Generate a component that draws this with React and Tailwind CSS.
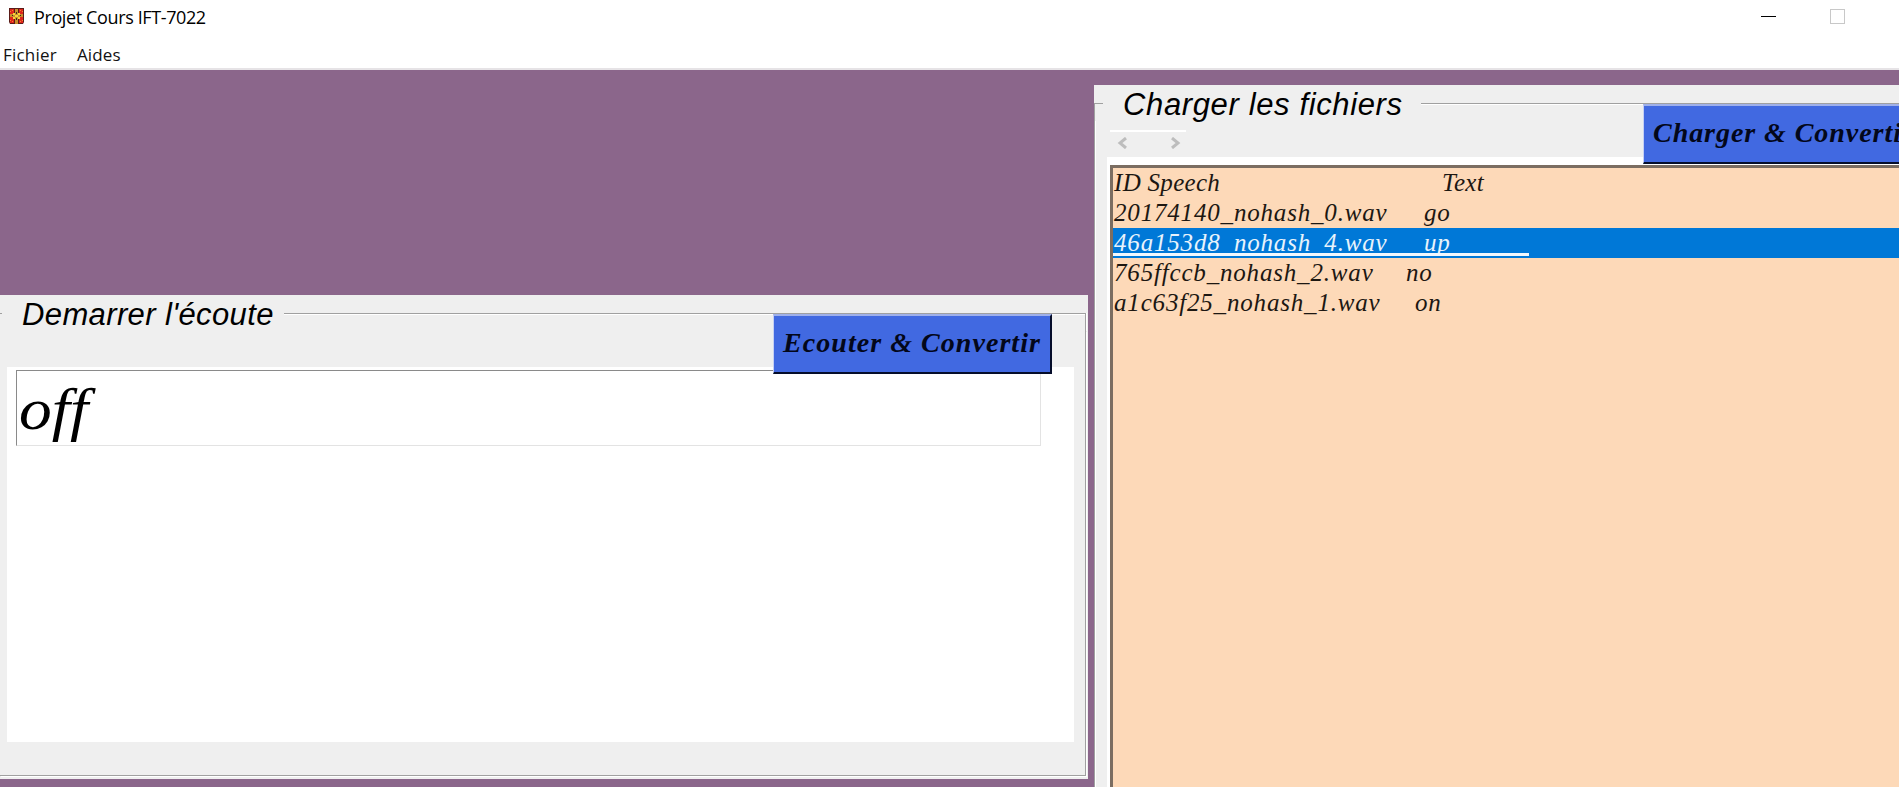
import React from 'react';

const rows = [
  { id: '20174140_nohash_0.wav', text: 'go', offset: 'w-[310px]' },
  { id: '46a153d8_nohash_4.wav', text: 'up', offset: 'w-[310px]', selected: true },
  { id: '765ffccb_nohash_2.wav', text: 'no', offset: 'w-[292px]' },
  { id: 'a1c63f25_nohash_1.wav', text: 'on', offset: 'w-[301px]' },
];

function Crest() {
  return (
    <svg width="15" height="17" viewBox="0 0 15 17" className="ml-[9px] block">
      <path d="M0 0h15v14l-1 2H1l-1-2z" fill="#5a1c18" />
      <path d="M1 1h4v5H1zM10 1h4v5h-4zM1 9h4v6H1zM10 9h4v6h-4z" fill="#e0241c" />
      <path d="M6 1h3v15H6zM1 6h13v3H1z" fill="#c98f2c" />
      <path d="M1 3h1v1H1zM3 2h1v1H3zM11 2h1v1h-1zM13 3h1v1h-1zM1 12h1v1H1zM3 13h1v1H3zM11 13h1v1h-1zM13 12h1v1h-1z" fill="#f08a2a" />
      <path d="M4 5h2v2H4zM9 5h2v2H9zM4 9h2v2H4zM9 9h2v2H9zM6 7h3v2H6z" fill="#f4d43a" />
      <path d="M7 4h1v2H7zM7 10h1v2H7zM3 7h1v1H3zM11 7h1v1h-1z" fill="#3d2920" />
    </svg>
  );
}

function TitleBar() {
  return (
    <header className="flex h-[36px] items-start pt-[8px] font-['Open_Sans',sans-serif] text-black">
      <Crest />
      <h1 className="-mt-[3px] ml-[10px] w-[180px] whitespace-nowrap text-[18px] leading-[25px] tracking-[-0.38px]">Projet Cours IFT-7022</h1>
      <div className="ml-auto mr-[54px] flex items-start gap-[54px]">
        <span className="mt-[8px] h-px w-[15px] bg-black" />
        <span className="mt-[1px] h-[15px] w-[15px] border border-[#c8c8c8]" />
      </div>
    </header>
  );
}

function ActionButton({ children, className }) {
  return (
    <button
      className={`absolute h-[60px] whitespace-nowrap border-b-2 border-l border-r-2 border-t-2 border-b-[#050d2a] border-l-[#c5d0f5] border-r-[#050d2a] border-t-[#9fb0ea] bg-[#4169e1] pl-[9px] text-left font-['Liberation_Serif',serif] text-[28px] font-bold italic leading-[52px] text-[#03071a] ${className}`}
    >
      <span className="-mt-[2px] block">{children}</span>
    </button>
  );
}

function ListenPanel() {
  return (
    <section className="relative mt-[225px] flex h-[484px] w-[1088px] flex-col bg-[#efefef] pr-[2px]">
      <div className="flex h-[36px]">
        <span className="mt-[18px] h-px w-[2px] bg-[#a0a0a0]" />
        <h2 className="w-[282px] whitespace-nowrap pl-[20px] font-['Liberation_Sans',sans-serif] text-[31px] italic leading-[40px] tracking-[0.38px] text-black">
          Demarrer l'écoute
        </h2>
        <span className="mt-[18px] flex-1 border-r border-t border-[#a0a0a0] shadow-[inset_0_1px_0_#fff,1px_0_0_#fff]" />
      </div>
      <div className="h-[445px] border-b border-r border-[#a0a0a0] pl-[7px] pt-[36px] shadow-[1px_1px_0_#fff]">
        <div className="h-[375px] w-[1067px] bg-white pl-[9px] pt-[3px]">
          <div className="h-[76px] w-[1025px] overflow-hidden border border-b-[#e3e3e3] border-l-[#8a8a8a] border-r-[#e3e3e3] border-t-[#8a8a8a] pl-[2px] font-['Liberation_Serif',serif] text-[59px] italic leading-[76px] text-black">
            <span className="inline-block origin-left scale-x-[1.11]">off</span>
          </div>
        </div>
      </div>
      <ActionButton className="left-[773px] top-[19px] w-[279px] tracking-[1.05px]">Ecouter &amp; Convertir</ActionButton>
    </section>
  );
}

function Scroller() {
  return (
    <div className="ml-[15px] mt-[9px] flex h-[27px] w-[76px] items-start justify-between border-t-2 border-white pl-[7px] pr-[5px] pt-[5px]">
      <svg width="11" height="12" viewBox="0 0 11 12" fill="none" stroke="#bdbdbd" strokeWidth="3">
        <path d="M9 1 3 6l6 5" />
      </svg>
      <svg width="11" height="12" viewBox="0 0 11 12" fill="none" stroke="#bdbdbd" strokeWidth="3">
        <path d="m2 1 6 5-6 5" />
      </svg>
    </div>
  );
}

function FilesPanel() {
  return (
    <section className="relative ml-[6px] mt-[15px] flex flex-1 flex-col bg-[#efefef]">
      <div className="flex h-[36px]">
        <span className="mt-[18px] w-[9px] border-l border-t border-[#a0a0a0]" />
        <h2 className="w-[318px] whitespace-nowrap pl-[20px] font-['Liberation_Sans',sans-serif] text-[31px] italic leading-[40px] tracking-[0.63px] text-black">
          Charger les fichiers
        </h2>
        <span className="mt-[18px] flex-1 border-t border-[#a0a0a0] shadow-[inset_0_1px_0_#fff]" />
      </div>
      <div className="flex flex-1 flex-col border-l border-[#a0a0a0] shadow-[inset_1px_0_0_#fff]">
        <Scroller />
        <div className="ml-[12px] flex flex-1 bg-white pl-[3px] pt-[8px]">
          <div className="flex-1 border-l-[3px] border-t-[3px] border-l-[#7b6d61] border-t-[#7b6d61] bg-[#fdd9b8] font-['Liberation_Serif',serif] text-[25px] italic leading-[29px] tracking-[0.82px] text-[#1c1712]">
            <div className="flex h-[30px] whitespace-pre pl-px">
              <span className="w-[328px] tracking-[0.3px]">ID Speech</span>
              <span className="tracking-[0.3px]">Text</span>
            </div>
            {rows.map((row) => (
              <div key={row.id} className={row.selected ? 'relative flex h-[30px] bg-[#0078d7] pl-px text-[#e8f3fc]' : 'flex h-[30px] pl-px'}>
                <span className={row.offset}>{row.id}</span>
                <span>{row.text}</span>
                {row.selected && <span className="absolute bottom-[2px] left-0 h-[3px] w-[416px] bg-[#f2f8fd]" />}
              </div>
            ))}
          </div>
        </div>
      </div>
      <ActionButton className="-right-[24px] top-[19px] w-[280px] tracking-[0.95px]">Charger &amp; Convertir</ActionButton>
    </section>
  );
}

export default function App() {
  return (
    <div className="flex h-[787px] w-[1899px] flex-col overflow-hidden bg-white">
      <TitleBar />
      <nav className="flex h-[34px] gap-[21px] border-b-2 border-[#e6e3e6] pl-[3px] pt-[6px] font-['Open_Sans',sans-serif] text-[17px] font-medium leading-[25px] text-[#111]">
        <span className="w-[53px] tracking-[0.2px]">Fichier</span>
        <span className="tracking-[0.1px]">Aides</span>
      </nav>
      <main className="flex flex-1 bg-[#8b668b]">
        <ListenPanel />
        <FilesPanel />
      </main>
    </div>
  );
}
